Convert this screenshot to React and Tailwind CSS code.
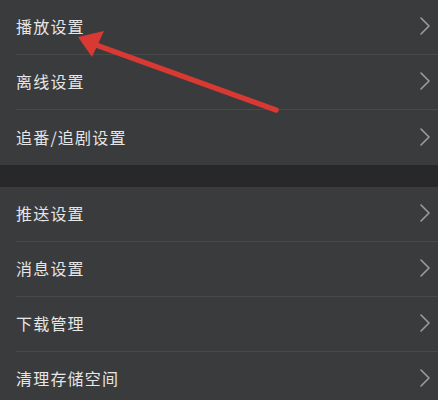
const groups = [
    ['播放设置', '离线设置', '追番/追剧设置'],
    ['推送设置', '消息设置', '下载管理', '清理存储空间'],
];

function Chevron() {
    return (
        <svg width="12" height="20" viewBox="0 0 12 20" className="text-[#9d9d9f]">
            <polyline points="2,2 10,10 2,18" fill="none" stroke="currentColor" strokeWidth="1.6" strokeLinecap="round" strokeLinejoin="round" />
        </svg>
    );
}

function Row({ label, last }) {
    return (
        <div className="flex h-[55px] items-stretch pl-4">
            <div
                className={
                    'flex flex-1 items-center justify-between pr-[7px] pb-[2px] ' +
                    (last ? '' : 'border-b border-[#48494b]')
                }
            >
                <span className="text-[16px] tracking-[1.2px] text-[#e6e6e6]">{label}</span>
                <Chevron />
            </div>
        </div>
    );
}

export default function App() {
    return (
        <div
            className="relative h-[400px] w-[438px] overflow-hidden bg-[#3a3b3d]"
            style={{ fontFamily: '"Noto Sans CJK SC", "Noto Sans", sans-serif' }}
        >
            <div>
                {groups[0].map((label, i) => (
                    <Row key={label} label={label} last={i === groups[0].length - 1} />
                ))}
            </div>
            <div className="h-[22px] bg-[#28282a]" />
            <div>
                {groups[1].map((label) => (
                    <Row key={label} label={label} />
                ))}
            </div>

            {/* red annotation arrow */}
            <svg className="pointer-events-none absolute left-0 top-0" width="438" height="400">
                <line x1="96" y1="45" x2="276" y2="110" stroke="#d83a33" strokeWidth="5.5" strokeLinecap="round" />
                <polygon points="78,37 104,31 92,57" fill="#d83a33" />
            </svg>
        </div>
    );
}
